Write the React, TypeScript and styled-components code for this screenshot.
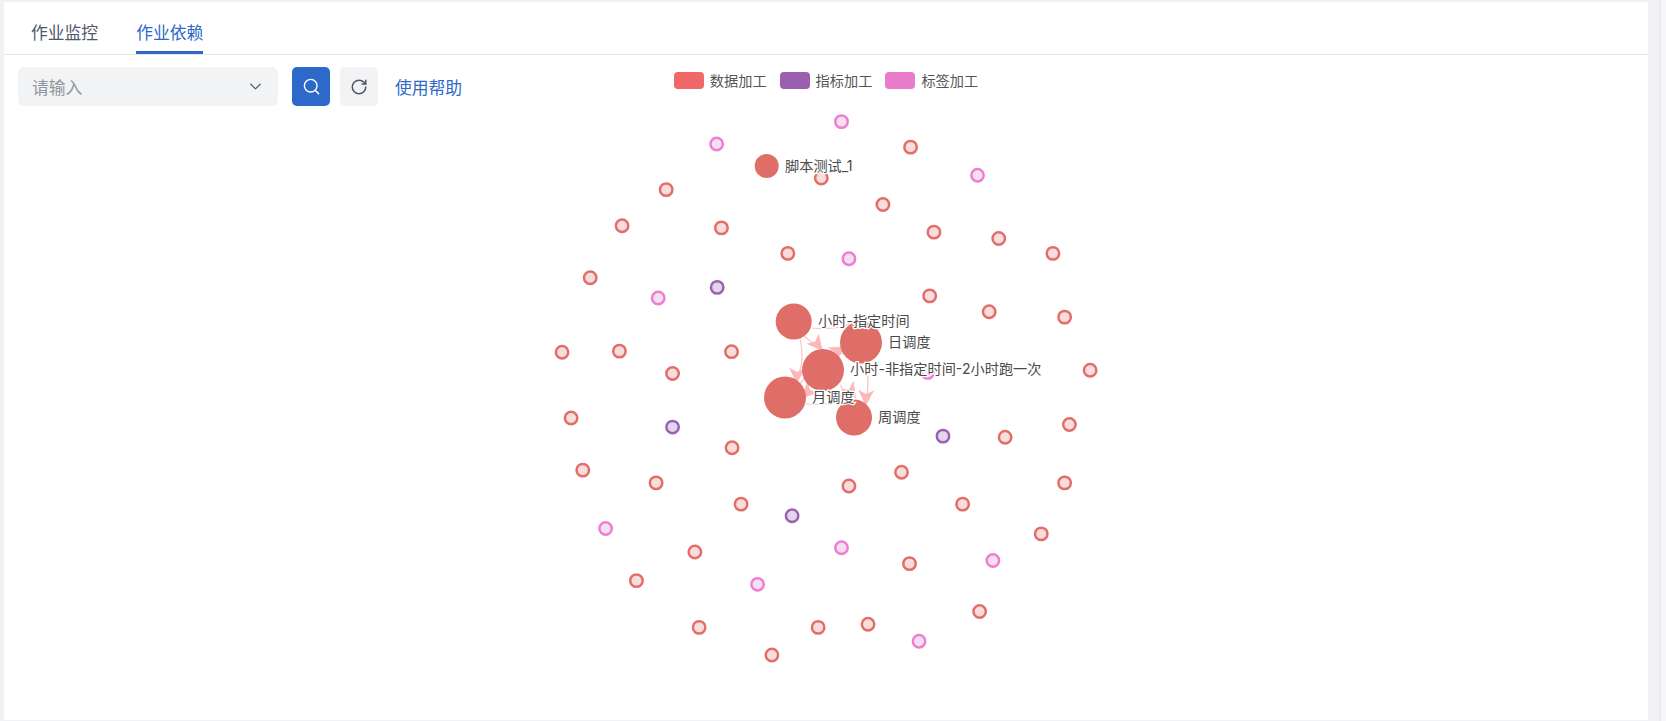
import React from "react";
import styled, { createGlobalStyle } from "styled-components";
import { ChevronDown, RotateCw, Search } from "lucide-react";

const FONT = `"Noto Sans CJK SC", "Noto Sans", "Liberation Sans", sans-serif`;

const Global = createGlobalStyle`
  html, body { margin: 0; padding: 0; background: #f0f1f4; overflow: hidden; }
  body { font-family: ${FONT}; }
`;

const Page = styled.div`
  display: flex;
  height: 721px;
  width: 1666px;
`;
const Main = styled.main`
  flex: 1;
  min-width: 0;
  padding: 2px 13px 1px 4px;
  display: flex;
`;
const ScrollTrack = styled.div`
  width: 5px;
  background: #f6f6f8;
  border-left: 1px solid #e6e6e8;
`;
const Panel = styled.section`
  flex: 1;
  background: #fff;
  position: relative;
  display: flex;
  flex-direction: column;
`;
const TabBar = styled.nav`
  display: flex;
  gap: 38px;
  height: 52px;
  padding-left: 27px;
  box-sizing: content-box;
  border-bottom: 1px solid #e5e6eb;
`;
const Tab = styled.div<{ $active?: boolean }>`
  font-size: 16.8px;
  line-height: 60px;
  height: 52px;
  box-sizing: border-box;
  color: ${(p) => (p.$active ? "#2d69c9" : "#4e5969")};
  border-bottom: 3px solid ${(p) => (p.$active ? "#2d69c9" : "transparent")};
  margin-bottom: -1px;
`;
const Toolbar = styled.div`
  display: flex;
  align-items: center;
  height: 39px;
  padding: 12px 0 5px 14px;
`;
const SelectBox = styled.div`
  width: 260px;
  height: 39px;
  box-sizing: border-box;
  background: #f2f3f5;
  border-radius: 6px;
  display: flex;
  align-items: center;
  justify-content: space-between;
  padding: 0 13px 0 14px;
  color: #9096a0;
  font-size: 16.8px;
  svg { color: #4e5969; }
`;
const SquareButton = styled.button<{ $primary?: boolean }>`
  width: 38px;
  height: 39px;
  padding: 0;
  border: 0;
  border-radius: 5px;
  margin-left: ${(p) => (p.$primary ? "14px" : "10px")};
  display: flex;
  align-items: center;
  justify-content: center;
  background: ${(p) => (p.$primary ? "#2d69c9" : "#f2f3f5")};
  color: ${(p) => (p.$primary ? "#fff" : "#4e5969")};
`;
const HelpLink = styled.a`
  margin-left: 17px;
  color: #2d69c9;
  font-size: 16.8px;
`;
const Legend = styled.div`
  position: absolute;
  top: 68px;
  left: 0;
  right: 0;
  display: flex;
  justify-content: center;
  gap: 13px;
  font-size: 14.2px;
  line-height: 20px;
  color: #555;
`;
const LegendItem = styled.div`
  display: flex;
  align-items: center;
  gap: 6px;
`;
const Swatch = styled.span<{ $color: string }>`
  width: 30px;
  height: 17px;
  border-radius: 4px;
  background: ${(p) => p.$color};
`;
const Chart = styled.div`
  flex: 1;
  min-height: 0;
  svg { display: block; overflow: visible; }
`;
const NodeLabel = styled.text`
  font-family: "Inter", ${FONT};
  font-size: 14.2px;
  fill: #4a4a4a;
  dominant-baseline: central;
  paint-order: stroke;
  stroke: #fff;
  stroke-width: 2.5px;
`;

const S = 1.0625;
const red: [number, number][] = [
  [857,138],[773,167],[627,178],[831,192],[585.5,212],[679,214],[879,218],[940,224],[741.5,238],[991,238],
  [555.5,261],[875,278],[931,293],[1002,298],[529,331],[583,330],[688.5,330.5],[633,351],[1026,348],
  [537.5,393],[1006.5,399],[946,411],[689,421],[548.5,442],[617.5,454],[799,457],[848.5,444],[1002,454],
  [697.5,474],[906,474],[980,502],[654,519],[856,530],[599,546],[658,590],[770,590],[817,587],[922,575],[726.5,616],
];
const pink: [number, number][] = [
  [792,114],[674.5,135],[920,164.5],[799,243],[619.5,280],[873,350],[570,497],[792,515],[934.5,527],[713,549.5],[865,603],
];
const purple: [number, number][] = [[675,270],[633,401.5],[887.5,410],[745.5,485]];

const big = [
  { x: 766.7, y: 166, r: 12, label: "脚本测试_1", lx: 785, ly: 165 },
  { x: 793.7, y: 321.5, r: 18, label: "小时-指定时间", lx: 818, ly: 320 },
  { x: 861, y: 342.5, r: 21, label: "日调度", lx: 888, ly: 341.5 },
  { x: 823, y: 370, r: 21, label: "小时-非指定时间-2小时跑一次", lx: 850, ly: 368.5 },
  { x: 785, y: 397.5, r: 21, label: "月调度", lx: 812, ly: 396 },
  { x: 854, y: 417.5, r: 18, label: "周调度", lx: 878, ly: 416 },
];

const edges = [
  "M804 336 L822 350",
  "M800 338 Q805 362 797 378",
  "M847 355 L836 352",
  "M812 328 Q835 330 850 324",
  "M866 363 Q870 385 866 400",
  "M805 378 L798 386",
  "M840 385 L852 402",
  "M806 404 Q825 405 838 402",
];

const smallNodes = [
  ...red.map(([x, y]) => ({ x, y, stroke: "#e36d68", fill: "#f7dedc" })),
  ...pink.map(([x, y]) => ({ x, y, stroke: "#ee7dd3", fill: "#f5e0f1" })),
  ...purple.map(([x, y]) => ({ x, y, stroke: "#9b62b3", fill: "#e2d6ea" })),
];

const arrowHeads: [number, number, number][] = [
  [817, 344, 50],
  [797, 375, 92],
  [838, 351, -30],
  [866, 397, 92],
  [808, 392, 135],
  [851, 391, 55],
  [846, 401, -5],
];

export default function App() {
  return (
    <Page>
      <Global />
      <Main>
        <Panel>
          <TabBar>
            <Tab>作业监控</Tab>
            <Tab $active>作业依赖</Tab>
          </TabBar>
          <Toolbar>
            <SelectBox>
              请输入
              <ChevronDown size={19} strokeWidth={1.7} />
            </SelectBox>
            <SquareButton $primary aria-label="search">
              <Search size={19} strokeWidth={1.8} />
            </SquareButton>
            <SquareButton aria-label="refresh">
              <RotateCw size={18} strokeWidth={2} />
            </SquareButton>
            <HelpLink>使用帮助</HelpLink>
          </Toolbar>
          <Legend>
            <LegendItem><Swatch $color="#f16868" />数据加工</LegendItem>
            <LegendItem><Swatch $color="#9b5fb0" />指标加工</LegendItem>
            <LegendItem><Swatch $color="#ea7ccc" />标签加工</LegendItem>
          </Legend>
          <Chart>
            <svg width="1644" height="609" viewBox="4 111 1644 609">
              {smallNodes.map((n, i) => (
                <circle key={i} cx={n.x * S} cy={n.y * S + 0.5} r={6.2} fill={n.fill} stroke={n.stroke} strokeWidth={2.5} />
              ))}
              {edges.map((d, i) => (
                <path key={i} d={d} fill="none" stroke="#fcc4c4" strokeWidth={1.2} />
              ))}
              {arrowHeads.map(([x, y, a], i) => (
                <path key={i} d="M9 0 L-7 -8 L-3 0 L-7 8 Z" fill="#fcb8b8" transform={`translate(${x} ${y}) rotate(${a})`} />
              ))}
              {big.map((n) => (
                <circle key={n.label} cx={n.x} cy={n.y} r={n.r} fill="#df6e68" />
              ))}
              {big.map((n) => (
                <NodeLabel key={n.label} x={n.lx} y={n.ly}>{n.label}</NodeLabel>
              ))}
            </svg>
          </Chart>
        </Panel>
      </Main>
      <ScrollTrack />
    </Page>
  );
}
